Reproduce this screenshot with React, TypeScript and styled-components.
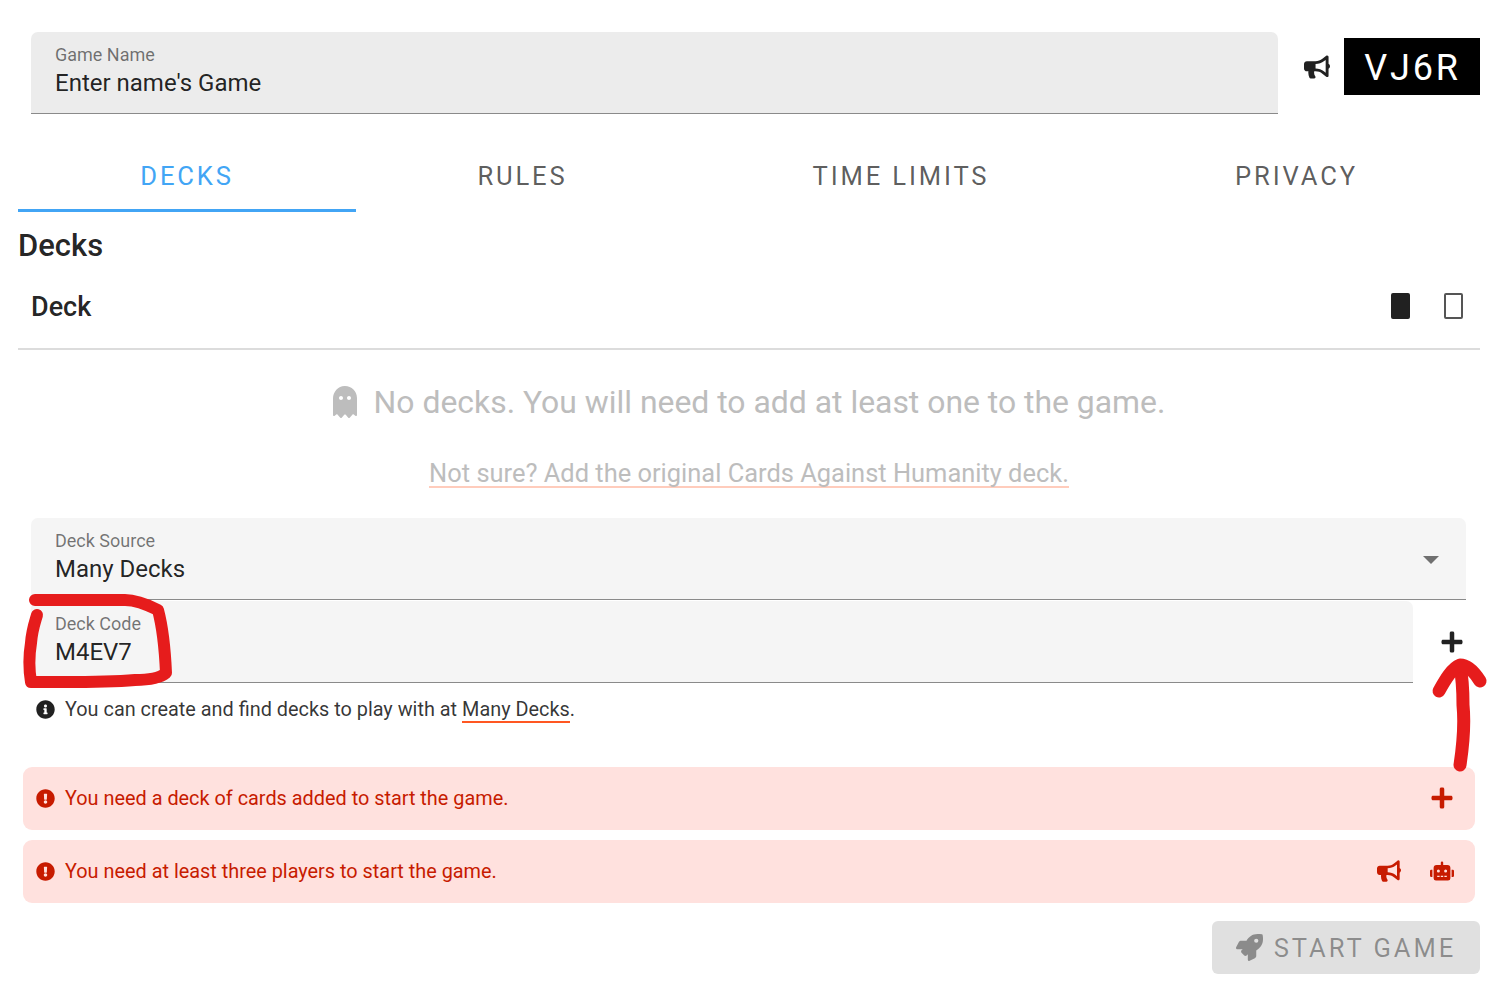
import React from "react";
import styled, { createGlobalStyle } from "styled-components";
import {
  FaBullhorn,
  FaExclamationCircle,
  FaGhost,
  FaInfoCircle,
  FaPlus,
  FaRobot,
  FaRocket,
} from "react-icons/fa";

const Global = createGlobalStyle`
  html, body { margin: 0; padding: 0; background: #fff; }
  body { font-family: Roboto, "Liberation Sans", sans-serif; color: rgba(0, 0, 0, 0.87); }
`;

const Page = styled.div`
  position: relative;
  width: 1501px;
  height: 988px;
  overflow: hidden;
  box-sizing: border-box;
  padding: 32px 21px 0 18px;
`;

const TopRow = styled.div`
  display: flex;
  align-items: flex-start;
  padding-left: 13px;
`;

const Field = styled.div<{ $width: number; $tone?: string }>`
  position: relative;
  box-sizing: border-box;
  width: ${(p) => p.$width}px;
  height: 82px;
  padding: 13px 24px 0;
  background: ${(p) => p.$tone ?? "#f5f5f5"};
  border-bottom: 1px solid #8a8a8a;
  border-radius: 7px 7px 0 0;
`;

const FieldLabel = styled.div`
  font-size: 18px;
  line-height: 20px;
  color: rgba(0, 0, 0, 0.54);
`;

const FieldValue = styled.div`
  margin-top: 2px;
  font-size: 24px;
  line-height: 32px;
  color: rgba(0, 0, 0, 0.87);
`;

const GameCodeGroup = styled.div`
  display: flex;
  align-items: center;
  gap: 14px;
  margin: 6px 0 0 26px;
  font-size: 26px;
`;

const GameCode = styled.div`
  width: 136px;
  height: 57px;
  padding: 2px 0 0 1px;
  box-sizing: border-box;
  display: flex;
  align-items: center;
  justify-content: center;
  background: #000;
  color: #fff;
  font-size: 36px;
  letter-spacing: 2.8px;
`;

const Tabs = styled.div`
  display: grid;
  grid-template-columns: 338px 333px 424px 367px;
  margin-top: 24px;
  height: 74px;
`;

const Tab = styled.div<{ $active?: boolean }>`
  display: flex;
  align-items: center;
  justify-content: center;
  font-size: 25.6px;
  font-weight: 400;
  letter-spacing: 2.85px;
  padding-top: 4px;
  height: 74px;
  box-sizing: border-box;
  color: ${(p) => (p.$active ? "#42a5f5" : "rgba(0, 0, 0, 0.65)")};
  border-bottom: 3px solid ${(p) => (p.$active ? "#42a5f5" : "transparent")};
`;

const Heading = styled.h2`
  margin: 14px 0 0;
  font-size: 31px;
  line-height: 40px;
  font-weight: 500;
  color: rgba(0, 0, 0, 0.87);
`;

const DeckHeader = styled.div`
  display: flex;
  align-items: center;
  justify-content: space-between;
  height: 82px;
  box-sizing: border-box;
  margin-top: 2px;
  padding: 0 17px 3px 13px;
  border-bottom: 2px solid #dcdcdc;
`;

const DeckTitle = styled.div`
  font-size: 27px;
  font-weight: 500;
`;

const CardIcons = styled.div`
  display: flex;
  gap: 34px;
  margin-bottom: 2px;
`;

const CardIcon = styled.div<{ $filled?: boolean }>`
  box-sizing: border-box;
  width: 19px;
  height: 26px;
  border-radius: 2px;
  border: 2px solid ${(p) => (p.$filled ? "#212121" : "#555")};
  background: ${(p) => (p.$filled ? "#212121" : "#fff")};
`;

const EmptyNote = styled.div`
  display: flex;
  align-items: center;
  justify-content: center;
  gap: 13px;
  margin-top: 30px;
  height: 44px;
  font-size: 31.9px;
  color: #bdbdbd;
  padding-right: 4px;
`;

const SuggestLine = styled.div`
  display: flex;
  justify-content: center;
  margin-top: 36px;
  height: 58px;
  font-size: 25.45px;
  color: #bdbdbd;
`;

const FadedLink = styled.span`
  height: 26px;
  line-height: 26px;
  border-bottom: 2px solid #ffccbc;
`;

const Fields = styled.div`
  padding-left: 13px;
`;

const SelectArrow = styled.div`
  position: absolute;
  right: 27px;
  top: 38px;
  width: 0;
  height: 0;
  border-left: 8px solid transparent;
  border-right: 8px solid transparent;
  border-top: 8px solid rgba(0, 0, 0, 0.54);
`;

const CodeRow = styled.div`
  display: flex;
  align-items: center;
  margin-top: 1px;
`;

const AddButton = styled.div`
  display: flex;
  width: 24px;
  margin-left: 27px;
  font-size: 24px;
  color: #212121;
`;

const Helper = styled.div`
  display: flex;
  align-items: center;
  gap: 10px;
  height: 52px;
  padding-left: 5px;
  font-size: 19.87px;
  color: rgba(0, 0, 0, 0.8);
`;

const HelperLink = styled.span`
  border-bottom: 2px solid #ff5722;
  line-height: 23px;
`;

const Alerts = styled.div`
  display: flex;
  flex-direction: column;
  gap: 10.5px;
  margin: 32px 5px 0;
`;

const Alert = styled.div`
  display: flex;
  align-items: center;
  gap: 10px;
  box-sizing: border-box;
  height: 62.5px;
  padding: 0 20px 0 13px;
  background: #ffe1de;
  border-radius: 9px;
  font-size: 19.87px;
  color: #c71b00;
`;

const AlertText = styled.span`
  flex: 1;
`;

const AlertAction = styled.div`
  display: flex;
  align-items: center;
  gap: 29px;
  font-size: 24px;
  margin-right: 1px;
`;

const FooterRow = styled.div`
  display: flex;
  justify-content: flex-end;
  margin-top: 18px;
`;

const StartButton = styled.div`
  display: flex;
  align-items: center;
  justify-content: center;
  gap: 11px;
  width: 268px;
  height: 53px;
  box-sizing: border-box;
  padding-top: 1px;
  border-radius: 6px;
  background: #e0e0e0;
  color: rgba(0, 0, 0, 0.38);
  font-size: 25.6px;
  letter-spacing: 2.95px;
`;

const Scribble = styled.svg`
  position: absolute;
  left: 0;
  top: 0;
  pointer-events: none;
`;

export default function App() {
  return (
    <Page>
      <Global />
      <TopRow>
        <Field $width={1247} $tone="#ececec">
          <FieldLabel>Game Name</FieldLabel>
          <FieldValue>Enter name's Game</FieldValue>
        </Field>
        <GameCodeGroup>
          <FaBullhorn color="#212121" />
          <GameCode>VJ6R</GameCode>
        </GameCodeGroup>
      </TopRow>

      <Tabs>
        <Tab $active>DECKS</Tab>
        <Tab>RULES</Tab>
        <Tab>TIME LIMITS</Tab>
        <Tab>PRIVACY</Tab>
      </Tabs>

      <Heading>Decks</Heading>
      <DeckHeader>
        <DeckTitle>Deck</DeckTitle>
        <CardIcons>
          <CardIcon $filled />
          <CardIcon />
        </CardIcons>
      </DeckHeader>

      <EmptyNote>
        <FaGhost size={32} color="#bdbdbd" />
        No decks. You will need to add at least one to the game.
      </EmptyNote>
      <SuggestLine>
        <FadedLink>Not sure? Add the original Cards Against Humanity deck.</FadedLink>
      </SuggestLine>

      <Fields>
        <Field $width={1435}>
          <FieldLabel>Deck Source</FieldLabel>
          <FieldValue>Many Decks</FieldValue>
          <SelectArrow />
        </Field>
        <CodeRow>
          <Field $width={1382}>
            <FieldLabel>Deck Code</FieldLabel>
            <FieldValue>M4EV7</FieldValue>
          </Field>
          <AddButton>
            <FaPlus />
          </AddButton>
        </CodeRow>
        <Helper>
          <FaInfoCircle size={19} color="#212121" />
          <span>
            You can create and find decks to play with at <HelperLink>Many Decks</HelperLink>.
          </span>
        </Helper>
      </Fields>

      <Alerts>
        <Alert>
          <FaExclamationCircle size={19} />
          <AlertText>You need a deck of cards added to start the game.</AlertText>
          <AlertAction>
            <FaPlus />
          </AlertAction>
        </Alert>
        <Alert>
          <FaExclamationCircle size={19} />
          <AlertText>You need at least three players to start the game.</AlertText>
          <AlertAction>
            <FaBullhorn />
            <FaRobot />
          </AlertAction>
        </Alert>
      </Alerts>

      <FooterRow>
        <StartButton>
          <FaRocket size={27} />
          START GAME
        </StartButton>
      </FooterRow>

      <Scribble width={1501} height={988} fill="none" stroke="#e61c1c" strokeLinecap="round" strokeLinejoin="round">
        <path
          strokeWidth={12}
          d="M35 600 C60 600 95 600 125 600 C138 600 150 606 158 610 C162 625 165 650 166 673 C160 678 150 680 135 680 C100 683 60 682 31 682 C29 670 29 655 31 643 C32 630 35 622 37 615"
        />
        <path strokeWidth={13} d="M1460 765 C1463 745 1465 725 1463 705 C1463 690 1462 676 1460 667" />
        <path strokeWidth={13} d="M1439 691 C1445 680 1452 668 1460 665 C1468 665 1475 673 1480 681" />
      </Scribble>
    </Page>
  );
}
